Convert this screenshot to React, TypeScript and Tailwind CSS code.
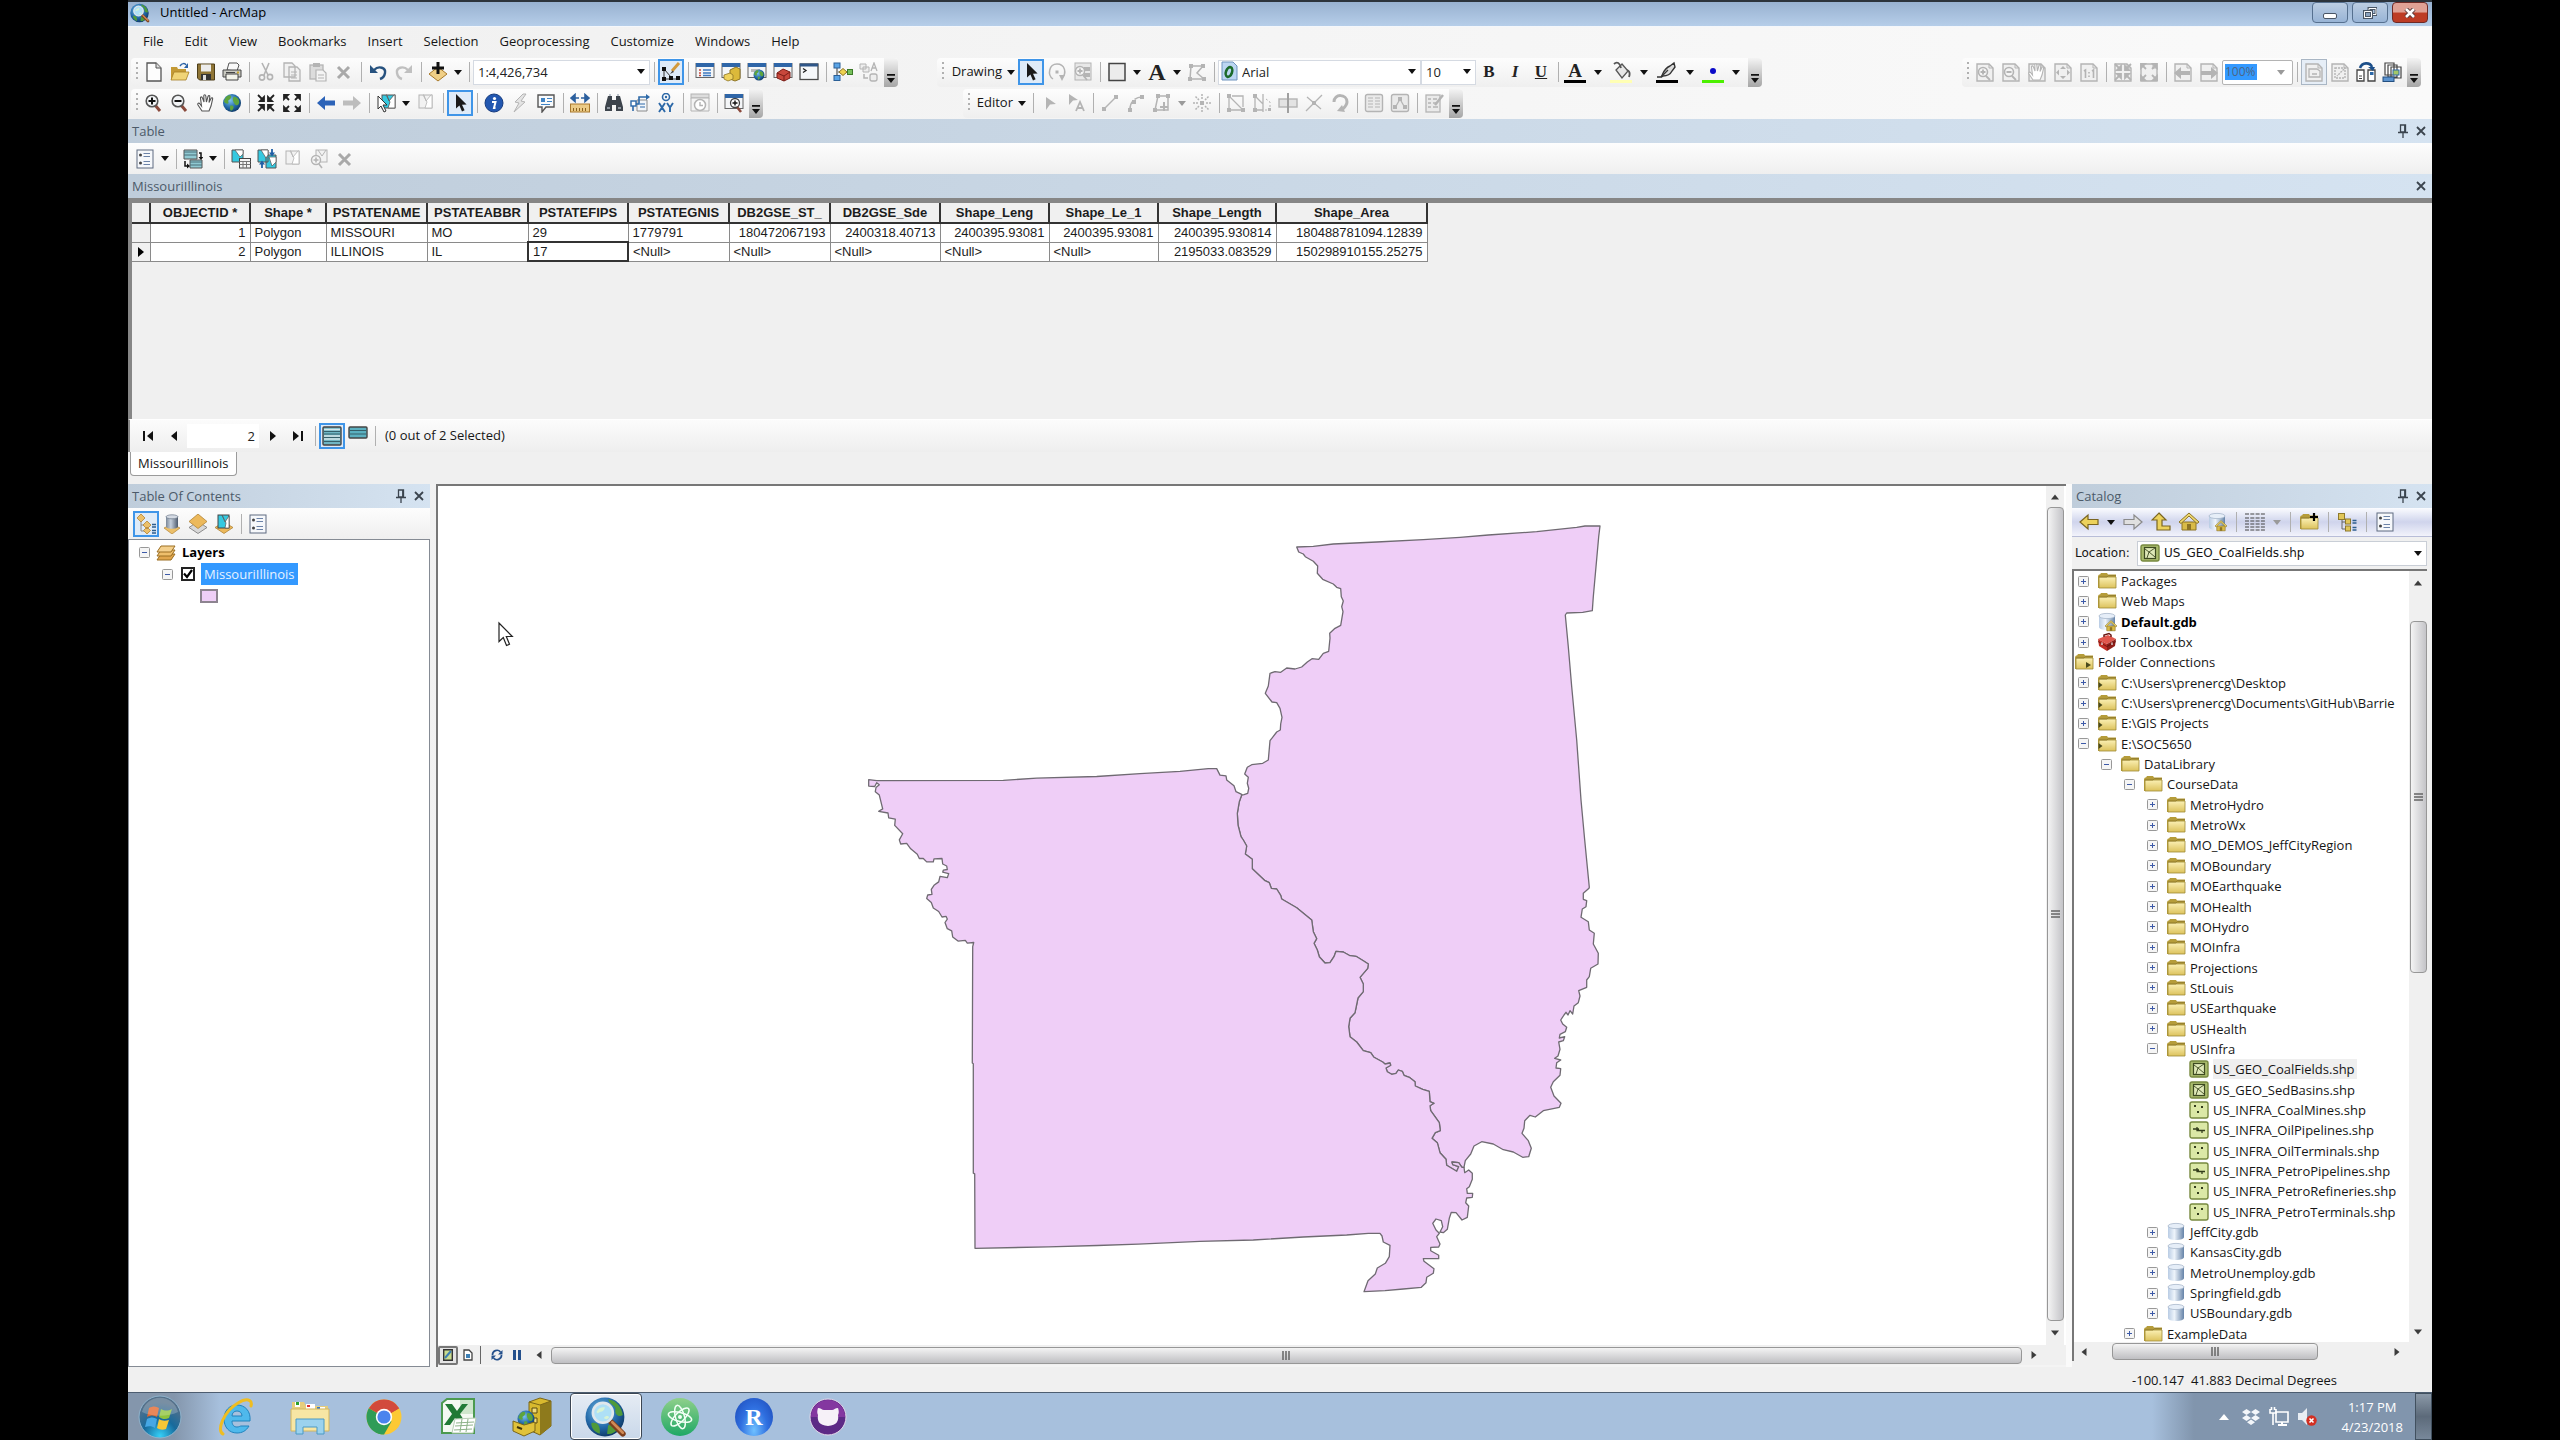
import React from "react";

/* ------------------------------------------------------------------ */
/* Icons (20 x 20 grid)                                                */
/* ------------------------------------------------------------------ */

type Kids = { children?: React.ReactNode };

const Ic = ({ children }: Kids) => (
  <svg viewBox="0 0 20 20" className="size-5 shrink-0" fill="none" aria-hidden="true">
    {children}
  </svg>
);

const G = "#b4b4b4";

const Magnifier = ({ sign }: { sign: "+" | "-" }) => (
  <Ic>
    <path d="M11 12l5 6" stroke="#8a4a3c" strokeWidth="3" />
    <circle cx="8" cy="8" r="5.8" fill="#f2f4f6" stroke="#555" strokeWidth="1.6" />
    <path d={sign === "+" ? "M4.5 8h7M8 4.5v7" : "M4.5 8h7"} stroke="#111" strokeWidth="2" />
  </Ic>
);
const Page = ({ children }: Kids) => (
  <Ic>
    <path d="M2 2h12l4 4v13H2z" fill="#f0f0f0" stroke={G} strokeWidth="1.4" />
    <path d="M14 2v4h4" stroke={G} />
    {children}
  </Ic>
);
const WindowFrame = ({ children }: Kids) => (
  <Ic>
    <rect x="1" y="1.5" width="18" height="14" fill="#f4f6f8" stroke="#666" />
    <rect x="1" y="1" width="18" height="4" fill="#2f66a8" />
    {children}
  </Ic>
);
const Folder = ({ link, root, plus }: { link?: boolean; root?: boolean; plus?: boolean }) => (
  <Ic>
    <path d="M1 5l1-1.5h1l1-1.5h6l1 1.5h8V17H1z" fill="#b59c3a" />
    <path d="M2 6h17v11H2z" fill="url(#folderFace)" stroke="#a08a35" strokeWidth=".8" />
    <path d="M2 6h8l1.500-1.500H19" stroke="#8f7a2c" strokeWidth=".8" />
    {link && <path d="M1.500 9l4 3-4 3z" fill="#4a4a1c" />}
    {root && <path d="M12 10l5 3-5 3z" fill="#4a4a1c" />}
    {plus && <path d="M15 1v8M11 5h8" stroke="#000" strokeWidth="2.2" />}
  </Ic>
);
const House = ({ x = 0, y = 0, s = 1 }: { x?: number; y?: number; s?: number }) => (
  <g transform={`translate(${x} ${y}) scale(${s})`}>
    <path d="M3 10h14v8H3z" fill="#d9bb48" stroke="#8d7425" />
    <path d="M0 10L10 1l10 9-2 1.500L10 4l-8 7.500z" fill="#efd86e" stroke="#8d7425" />
    <path d="M8 12h4v6H8z" fill="#8d7425" />
  </g>
);
const Cylinder = ({ home }: { home?: boolean }) => (
  <Ic>
    <path d="M2 4v11c0 2 3.500 3 8 3s8-1 8-3V4z" fill="url(#cyl)" />
    <ellipse cx="10" cy="4" rx="8" ry="2.6" fill="#e6eef8" stroke="#a8b8cc" strokeWidth=".8" />
    {home && <House x={8} y={8} s={0.6} />}
  </Ic>
);
const Toolbox = () => (
  <Ic>
    <path d="M1 7l10-4 8 4-9 5z" fill="#e0574c" />
    <path d="M1 7l9 5v7L2 14z" fill="#c23026" />
    <path d="M19 7l-9 5v7l8-5z" fill="#8f1f18" />
    <path d="M7 5V3l5-1.500L14 3v2" stroke="#6b1712" strokeWidth="1.5" />
    <path d="M1 9.500l9 5 9-5" stroke="#5f120d" strokeWidth=".8" />
    <path d="M5 10.500v2.500M15 10.500v2.500" stroke="#eee" strokeWidth="1.2" />
  </Ic>
);
const Shape = ({ kind }: { kind: "poly" | "pt" | "line" }) => (
  <Ic>
    <rect x="1" y="2" width="18" height="16" rx="2" fill={kind === "poly" ? "#a9bb6c" : "#dbe8a6"} stroke="#77893f" strokeWidth="1.4" />
    {kind === "poly" && (
      <>
        <rect x="4.5" y="4.5" width="11" height="11" fill="#dfe9b8" stroke="#3d4a20" strokeWidth="1.2" />
        <path d="M5 6l4 3 6-4M9 9l-2 6M9 9l6 5" stroke="#3d4a20" strokeWidth=".9" />
      </>
    )}
    {kind === "pt" && <path d="M5 5h2v2H5zM12 6h2v2h-2zM8 11h2v2H8z" fill="#333d1c" />}
    {kind === "line" && <path d="M4 9h6M10 10.500h6M8 7v3.500h4M13 10v3" stroke="#333d1c" strokeWidth="1.3" />}
  </Ic>
);
const CursorArrow = () => (
  <Ic>
    <path d="M6 1v14.500l3.400-3L12 18.500l2.600-1.200-2.600-5.600 4.600-.3z" fill="#1a1a1a" />
  </Ic>
);
const Cross = () => (
  <Ic>
    <path d="M4 5l11 11M15 5L4 16" stroke="#a9a9a9" strokeWidth="3" />
  </Ic>
);
const ListIcon = () => (
  <Ic>
    <rect x="2" y="1" width="16" height="18" fill="#f6f8fb" stroke="#5e6b80" />
    <circle cx="5.5" cy="6" r="1.5" fill="#444" />
    <circle cx="5.5" cy="14" r="1.5" fill="#444" />
    <path d="M8.500 4.500H15M8.500 7.500H15M8.500 12.500H15M8.500 15.500H15" stroke="#6c83a8" />
  </Ic>
);
const TreeIcon = () => (
  <Ic>
    <path d="M5 6v11h6M5 10h6" stroke="#666" />
    <rect x="1.5" y="1.5" width="6" height="6" fill="#e0c659" stroke="#8f7a2c" />
    <rect x="8.5" y="7" width="5" height="5" fill="#e0c659" stroke="#8f7a2c" />
    <rect x="8.5" y="14" width="5" height="5" fill="#e0c659" stroke="#8f7a2c" />
    <path d="M15.500 8.500h4M15.500 11h4M15.500 15.500h4M15.500 18h4" stroke="#2d5e8e" strokeWidth="1.3" />
  </Ic>
);
const BlueArrow = ({ dir, tone }: { dir: "l" | "r"; tone: string }) => (
  <Ic>
    <path d={dir === "l" ? "M1 10l8-7v4.500h10v5H9V17z" : "M19 10l-8-7v4.500H1v5h10V17z"} fill={tone} />
  </Ic>
);
const Undo = ({ flip, tone }: { flip?: boolean; tone: string }) => (
  <Ic>
    <g transform={flip ? "matrix(-1 0 0 1 20 0)" : undefined}>
      <path d="M2 3v8h8z" fill={tone} />
      <path d="M6 8c5-5 12-2 11 3-.5 3-2 5-5 6" stroke={tone} strokeWidth="2.4" />
    </g>
  </Ic>
);
const Corners = ({ out, tone = "#222" }: { out?: boolean; tone?: string }) => (
  <g stroke={tone} strokeWidth="1.8" fill={tone}>
    {out ? (
      <path d="M2 6V2h4zM14 2h4v4zM18 14v4h-4zM6 18H2v-4zM3 3l4 4M17 3l-4 4M3 17l4-4M17 17l-4-4" />
    ) : (
      <path d="M8 4v4H4zM12 4v4h4zM12 16v-4h4zM8 16v-4H4zM2 2l5 5M18 2l-5 5M2 18l5-5M18 18l-5-5" />
    )}
  </g>
);
const Globe = ({ x = 10, y = 10, r = 9 }: { x?: number; y?: number; r?: number }) => (
  <g transform={`translate(${x} ${y}) scale(${r / 10})`}>
    <circle r="10" fill="url(#globe)" />
    <path d="M-7-6c3-4 7-3 6 0s-4 2-3 5-4 2-5-1zM2-7c4 0 6 3 6 6S5 4 3 1 0-5 2-7zM-2 3c3-1 5 1 3 4S-3 8-2 3z" fill="#5da43c" />
  </g>
);
const Hand = ({ tone = "#555" }: { tone?: string }) => (
  <path
    d="M6 18l-4-6c-1-2 1-2.500 2-1l1.500 2L4.500 5c0-1.500 1.500-1.500 2 0L8 9 7.800 3c0-1.600 1.700-1.600 2 0l.6 6L12 3.500c.5-1.400 2-1 1.800.4L13 9.500l2-4c.8-1.300 2-.6 1.600.6L15 13l-2 5z"
    fill="#fff"
    stroke={tone}
    strokeWidth="1.1"
  />
);
const MapSheet = ({ tone = "#35c9e0", edge = "#555" }: { tone?: string; edge?: string }) => (
  <g>
    <rect x="3" y="2" width="13" height="13" fill={tone} stroke={edge} />
    <path d="M8 2l2 6 5-6h1v13H9l2-6-4-7z" fill="#fff" stroke={edge} strokeWidth=".8" />
  </g>
);

const icons = {
  newDoc: (
    <Ic>
      <path d="M3 1h9l5 5v13H3z" fill="#fdfdfd" stroke="#555" strokeWidth="1.3" />
      <path d="M12 1v5h5" fill="#ddd" stroke="#555" />
    </Ic>
  ),
  open: (
    <Ic>
      <path d="M1 5h6l1 2h8v11H1z" fill="#c49a35" />
      <path d="M4 10h15l-3 8H1z" fill="#f0d477" stroke="#a67f25" strokeWidth=".8" />
      <path d="M10 4c2-3 5-3 6-1" stroke="#2b62a6" strokeWidth="1.5" />
      <path d="M18 1v5h-4z" fill="#2b62a6" />
    </Ic>
  ),
  save: (
    <Ic>
      <path d="M1.500 2h17v16h-15l-2-2z" fill="#8f7536" stroke="#4c3d18" />
      <rect x="5" y="2.5" width="10" height="7" fill="#ececec" />
      <rect x="5" y="12" width="10" height="6" fill="#333" />
      <rect x="7" y="13" width="3" height="5" fill="#ddd" />
    </Ic>
  ),
  print: (
    <Ic>
      <path d="M5 8l2-7h8l2 2-2 6z" fill="#fafafa" stroke="#555" />
      <path d="M1 8h18v7H1z" fill="#c9c9c0" stroke="#444" />
      <path d="M4 12h12v6H4z" fill="#f3f3ea" stroke="#444" />
      <path d="M4 10.500h9" stroke="#444" />
      <path d="M15 10.500h2" stroke="#c6a52b" strokeWidth="2" />
    </Ic>
  ),
  cut: (
    <Ic>
      <path d="M6 1l6 12M13 1L8 13" stroke={G} strokeWidth="1.6" />
      <circle cx="6" cy="15.5" r="2.6" stroke={G} strokeWidth="1.6" />
      <circle cx="14" cy="15" r="2.6" stroke={G} strokeWidth="1.6" />
    </Ic>
  ),
  copy: (
    <Ic>
      <path d="M2 1h8l3 3v11H2zM7 5h8l3 3v11H7z" fill="#f1f1f1" stroke={G} strokeWidth="1.3" />
      <path d="M9 10h6M9 13h6M9 16h6" stroke={G} />
    </Ic>
  ),
  paste: (
    <Ic>
      <rect x="2" y="3" width="13" height="14" fill="#dcdcdc" stroke={G} strokeWidth="1.3" />
      <rect x="5" y="1" width="7" height="4" fill={G} />
      <path d="M8 8h7l3 3v8H8z" fill="#f4f4f4" stroke={G} strokeWidth="1.2" />
      <path d="M10 13h6M10 16h6" stroke={G} />
    </Ic>
  ),
  cross: <Cross />,
  undo: <Undo tone="#27527f" />,
  redo: <Undo flip tone="#c0c0c0" />,
  addData: (
    <Ic>
      <path d="M10 5l9 7-9 7-9-7z" fill="#f0cf86" stroke="#a97a2a" />
      <path d="M10 0v12M4 6h12" stroke="#111" strokeWidth="3" />
    </Ic>
  ),
  editorTb: (
    <Ic>
      <path d="M18 1l-7 8" stroke="#d39a3b" strokeWidth="3" />
      <path d="M11.500 8.500L9 12l4-2z" fill="#444" />
      <path d="M3 7v10h14M3 7l7 8" stroke="#333" />
      <path d="M1 5h4v4H1zM1 15h4v4H1zM8 14h4v4H8zM15 14h4v4h-4z" fill="#111" />
    </Ic>
  ),
  toc: (
    <WindowFrame>
      <path d="M4 8h2M4 11h2M4 13.500h2" stroke="#c6483b" strokeWidth="1.6" />
      <path d="M8 8h8M8 11h8M8 13.500h8" stroke="#3e79c0" strokeWidth="1.4" />
    </WindowFrame>
  ),
  catalogWin: (
    <WindowFrame>
      <path d="M9 8l6-3 4 2v10l-5 2-5-2z" fill="#dcb93a" stroke="#8d7425" />
      <path d="M3 13l6-2 3 2v4l-5 2-4-2z" fill="#efd25c" stroke="#8d7425" strokeWidth=".8" />
    </WindowFrame>
  ),
  searchWin: (
    <WindowFrame>
      <rect x="4" y="7" width="9" height="3" fill="#bbb" />
      <Globe x={12} y={13} r={5.5} />
    </WindowFrame>
  ),
  toolboxWin: (
    <WindowFrame>
      <path d="M4 11l6-4 7 3v6l-6 3-7-3z" fill="#c8473b" stroke="#7b1d16" />
      <path d="M4 11l7 3 6-4M11 14v5" stroke="#7b1d16" />
    </WindowFrame>
  ),
  python: (
    <Ic>
      <rect x="1" y="2" width="18" height="15.5" fill="#f6f8fa" stroke="#4b4b4b" strokeWidth="1.3" />
      <rect x="1" y="1.5" width="18" height="3" fill="#2f5688" />
      <path d="M4 6.500l3 2-3 2" stroke="#222" strokeWidth="1.3" />
    </Ic>
  ),
  model: (
    <Ic>
      <path d="M4 5v11M5 10h12" stroke="#555" strokeWidth="1.2" />
      <rect x="1" y="1" width="6" height="5" fill="#5aa4e6" stroke="#2a5f96" />
      <rect x="1" y="13.5" width="6" height="5" fill="#5aa4e6" stroke="#2a5f96" />
      <path d="M10 6.500l4 3.500-4 3.500L6 10z" fill="#eed24f" stroke="#8d7425" />
      <rect x="14.5" y="7.5" width="5" height="5" fill="#77c05b" stroke="#3c7a28" />
    </Ic>
  ),
  convert: (
    <Ic>
      <path d="M1 2h6v5H1zM4 5h6v5H4z" fill="#eee" stroke={G} />
      <path d="M12 9l3-8 3 8M13 6h4" stroke={G} strokeWidth="1.3" />
      <rect x="11" y="12" width="7" height="7" rx="2" fill="#eee" stroke={G} strokeWidth="1.3" />
      <path d="M5 12v4h4" stroke={G} strokeWidth="1.5" />
    </Ic>
  ),
  zoomIn: <Magnifier sign="+" />,
  zoomOut: <Magnifier sign="-" />,
  pan: (
    <Ic>
      <Hand />
    </Ic>
  ),
  full: (
    <Ic>
      <Globe />
    </Ic>
  ),
  fixedIn: (
    <Ic>
      <Corners />
    </Ic>
  ),
  fixedOut: (
    <Ic>
      <Corners out />
    </Ic>
  ),
  back: <BlueArrow dir="l" tone="#2c63b8" />,
  forward: <BlueArrow dir="r" tone="#bdbdbd" />,
  selectFeat: (
    <Ic>
      <g transform="translate(3 0)">
        <MapSheet />
      </g>
      <path d="M2 3v13l3-3 3 6 2-1-3-6h4z" fill="#fff" stroke="#333" />
    </Ic>
  ),
  clearSel: (
    <Ic>
      <MapSheet tone="#f2f2f2" edge={G} />
    </Ic>
  ),
  cursor: <CursorArrow />,
  identify: (
    <Ic>
      <circle cx="10" cy="10" r="9" fill="#2257b0" stroke="#163c80" />
      <circle cx="10.5" cy="5.5" r="1.6" fill="#fff" />
      <path d="M8 9h3.500l-1.500 6h1.500" stroke="#fff" strokeWidth="2" />
    </Ic>
  ),
  bolt: (
    <Ic>
      <path d="M13 1L5 9l4 1-5 9L15 9l-4-1 5-7z" fill="#e4e4e4" stroke={G} />
    </Ic>
  ),
  htmlPopup: (
    <Ic>
      <path d="M2 2h16v12h-8l-4 5v-5H2z" fill="#f8fafc" stroke="#555" strokeWidth="1.4" />
      <rect x="5" y="5" width="4" height="4" fill="#3f83c4" />
      <path d="M11 5.500h5M11 8.500h5M5 11.500h9" stroke="#3f83c4" strokeWidth="1.2" />
    </Ic>
  ),
  measure: (
    <Ic>
      <rect x=".5" y="11" width="19" height="8" fill="#eccb86" stroke="#a9792d" />
      <path d="M3.500 18v-3M6.500 18v-3M9.500 18v-3M12.500 18v-3M15.500 18v-3" stroke="#8b6220" />
      <path d="M1 5l4-3.500v7zM19 5l-4-3.500v7zM5 5h4M11 5h4" fill="#2b5f9e" stroke="#2b5f9e" strokeWidth="1.6" />
    </Ic>
  ),
  find: (
    <Ic>
      <path d="M4 3h4v4h4V3h4l3 11v4h-7v-6H8v6H1v-4z" fill="#3d444c" />
      <path d="M5 2h2M13 2h2M3 15h3M14 15h3" stroke="#aab3bd" strokeWidth="1.5" />
    </Ic>
  ),
  route: (
    <Ic>
      <path d="M7 7h10v11H7z" fill="#f2f6fa" stroke="#8a8a8a" />
      <path d="M3 18v-7h6V4h8" stroke="#2d69a8" strokeWidth="1.6" />
      <path d="M16 1l4 3-4 3z" fill="#2d69a8" />
      <rect x="1" y="8" width="5" height="5" fill="#fff" stroke="#2d69a8" strokeWidth="1.4" />
      <path d="M10 11h5M10 14h5" stroke="#2d69a8" />
    </Ic>
  ),
  goXY: (
    <Ic>
      <circle cx="10" cy="4" r="3.5" stroke="#2d69a8" strokeWidth="1.6" />
      <circle cx="10" cy="4" r="1.2" fill="#2d69a8" />
      <path d="M3 10l6 9M9 10l-6 9M11 10l3 4.500V19M17 10l-3 4.500" stroke="#2d69a8" strokeWidth="1.9" />
    </Ic>
  ),
  time: (
    <Ic>
      <rect x="1" y="1" width="18" height="4" fill="#ddd" stroke={G} />
      <path d="M1 5h18v13H1z" fill="#f4f4f4" stroke={G} />
      <circle cx="10" cy="12" r="5.5" fill="#fff" stroke={G} strokeWidth="1.5" />
      <path d="M10 9v3.500h3" stroke={G} strokeWidth="1.4" />
    </Ic>
  ),
  viewer: (
    <WindowFrame>
      <path d="M13 14l4 5" stroke="#8a4a3c" strokeWidth="2.6" />
      <circle cx="11" cy="10" r="4.5" fill="#fff" stroke="#444" strokeWidth="1.3" />
      <path d="M8.500 10h5M11 7.500v5" stroke="#111" strokeWidth="1.4" />
    </WindowFrame>
  ),
  rotate: (
    <Ic>
      <path d="M6 17C0 13 2 2 10 2s10 9 5 14" stroke={G} strokeWidth="1.5" />
      <path d="M12 13h6l-3 6z" fill={G} />
      <rect x="8.5" y="8.5" width="3" height="3" fill={G} />
    </Ic>
  ),
  zoomSel: (
    <Ic>
      <rect x="2" y="1" width="16" height="17" fill="#e8e8e8" stroke={G} />
      <path d="M11 5h6v4h-6zM11 11h6v4h-6z" fill={G} />
      <circle cx="7" cy="9" r="4.5" fill="#f5f5f5" stroke={G} strokeWidth="1.5" />
      <path d="M4.500 9h5M7 6.500v5M10 13l4 5" stroke={G} strokeWidth="1.8" />
    </Ic>
  ),
  rect: (
    <Ic>
      <rect x="2" y="1.5" width="16" height="17" fill="#ececec" stroke="#444" strokeWidth="1.5" />
    </Ic>
  ),
  editVerts: (
    <Ic>
      <path d="M4 4h12l-6 7 7 6H3z" stroke={G} strokeWidth="1.5" />
      <path d="M2 2h4v4H2zM14 2h4v4h-4zM1 15h4v4H1zM15 15h4v4h-4z" fill={G} />
    </Ic>
  ),
  editArrow: (
    <Ic>
      <path d="M6 4l10 7-6 .5L6 17z" fill={G} />
    </Ic>
  ),
  editAnno: (
    <Ic>
      <path d="M3 1l9 6-5 .5L3 12z" fill={G} />
      <path d="M10 18l4-9 4 9M11.500 15h5" stroke={G} strokeWidth="1.8" />
    </Ic>
  ),
  segStraight: (
    <Ic>
      <path d="M4 16L16 4" stroke={G} strokeWidth="1.5" />
      <path d="M2 14h4v4H2zM14 2h4v4h-4z" fill={G} />
    </Ic>
  ),
  segArc: (
    <Ic>
      <path d="M4 16C4 9 9 4 16 4" stroke={G} strokeWidth="1.5" strokeDasharray="9 2" />
      <path d="M2 15h4v4H2zM6 7h4v4H6zM14 2h4v4h-4z" fill={G} />
    </Ic>
  ),
  trace: (
    <Ic>
      <path d="M6 3h10v14H3z" stroke={G} strokeWidth="1.5" />
      <path d="M4 1h4v4H4zM14 1h4v4h-4zM1 15h4v4H1z" fill={G} />
      <path d="M12 9v9M8 14h8" stroke={G} strokeWidth="2" />
    </Ic>
  ),
  point: (
    <Ic>
      <path d="M10 1v5M10 14v5M1 10h5M14 10h5M3.500 3.500L7 7M13 13l3.500 3.500M16.500 3.500L13 7M7 13l-3.500 3.500" stroke={G} strokeWidth="1.5" strokeDasharray="2 1" />
      <rect x="8" y="8" width="4" height="4" fill={G} />
    </Ic>
  ),
  editV1: (
    <Ic>
      <path d="M3 3v14h14L3 3M6 3h11v11" stroke={G} strokeWidth="1.3" />
      <path d="M1 1h4v4H1zM1 15h4v4H1zM15 15h4v4h-4z" fill={G} />
    </Ic>
  ),
  reshape: (
    <Ic>
      <path d="M3 3v14M3 3l8 8v6H3M11 1v18" stroke={G} strokeWidth="1.3" />
      <path d="M14 6l4 3v8h-6" stroke={G} strokeDasharray="2 2" />
      <path d="M1 1h4v4H1zM1 15h4v4H1zM16 15h3v3h-3z" fill={G} />
    </Ic>
  ),
  cutPoly: (
    <Ic>
      <rect x="1" y="6" width="18" height="8" fill="#e3e3e3" stroke={G} strokeWidth="1.4" />
      <path d="M10 0v20" stroke="#a0a0a0" strokeWidth="2" />
    </Ic>
  ),
  split: (
    <Ic>
      <path d="M2 18L18 2M3 4l14 12" stroke={G} strokeWidth="1.3" />
      <rect x="8" y="8" width="4" height="4" fill={G} />
    </Ic>
  ),
  rotate2: (
    <Ic>
      <path d="M4 9c0-9 13-8 13 0 0 3-2 5-5 8" stroke={G} strokeWidth="3" />
      <path d="M7 18l8 1-3-7z" fill={G} />
    </Ic>
  ),
  attributes: (
    <Ic>
      <rect x="1.5" y="1.5" width="17" height="17" rx="2" fill="#eaeaea" stroke={G} strokeWidth="1.4" />
      <path d="M4 5h5M4 8h5M4 11h5M4 14h5M11 5h5M11 8h5M11 11h5M11 14h5" stroke={G} />
    </Ic>
  ),
  sketchProps: (
    <Ic>
      <rect x="1.5" y="1.5" width="17" height="17" rx="2" fill="#eaeaea" stroke={G} strokeWidth="1.4" />
      <path d="M5 15l5-9 5 9" stroke={G} strokeWidth="1.3" />
      <path d="M3 12h4v4H3zM8 4h4v4H8zM13 12h4v4h-4z" fill={G} />
    </Ic>
  ),
  create: (
    <Ic>
      <rect x="2" y="2" width="14" height="17" fill="#eaeaea" stroke={G} strokeWidth="1.3" />
      <path d="M4 6h3M4 10h3M4 14h3M9 6h4M9 10h3M9 14h5" stroke={G} strokeWidth="1.5" />
      <path d="M19 2l-8 10" stroke={G} strokeWidth="2.5" />
    </Ic>
  ),
  list: <ListIcon />,
  related: (
    <Ic>
      <path d="M1 1h13v9H1zM7 11h12v8H7z" fill="#8fc9d2" stroke="#555" />
      <path d="M1 3h13M1 6h13M7 13h12M7 16h12" stroke="#4a6e78" />
      <path d="M16 4h2v5M2 12v5h3" stroke="#111" strokeWidth="1.5" />
      <path d="M15.500 8h5L18 11zM4 14.500v5l3-2.500z" fill="#111" />
    </Ic>
  ),
  selectBy: (
    <Ic>
      <path d="M1 1h11v12H1z" fill="#35c9e0" stroke="#555" />
      <path d="M4 1l5 7 3-3V1z" fill="#fff" stroke="#555" strokeWidth=".7" />
      <rect x="8.5" y="9.5" width="11" height="9.5" fill="#f5f5f5" stroke="#444" />
      <path d="M8.500 12.500h11M8.500 15.500h11M12 12v7M15.500 12v7" stroke="#777" />
    </Ic>
  ),
  switchSel: (
    <Ic>
      <path d="M1 1h10v12H1zM9 6h10v13H9z" fill="#35c9e0" stroke="#555" />
      <path d="M4 1l5 8 2-3V1zM12 8l3 9 4-4V8z" fill="#fff" stroke="#555" strokeWidth=".7" />
      <path d="M15 0v6M5 19v-6" stroke="#1f5fa6" strokeWidth="1.8" />
      <path d="M12 3.500h6l-3 4zM2 15.500h6L5 11.500z" fill="#1f5fa6" />
    </Ic>
  ),
  zoomSel2: (
    <Ic>
      <rect x="7" y="1" width="11" height="12" fill="#f2f2f2" stroke={G} />
      <path d="M9 1l4 6 4-6" stroke={G} />
      <circle cx="7" cy="11" r="4.5" fill="#f6f6f6" stroke={G} strokeWidth="1.5" />
      <path d="M4.500 11h5M7 8.500v5M10 15l3 4" stroke={G} strokeWidth="1.6" />
    </Ic>
  ),
  tocOrder: (
    <Ic>
      <path d="M5 7v10h5M5 11h5" stroke="#888" />
      <path d="M5 0l4 4-4 4-4-4zM11 7l4 4-4 4-4-4zM11 13l3.500 3.500L11 20l-3.500-3.500z" fill="#ecc06a" stroke="#b58434" strokeWidth=".8" />
      <path d="M16 10.500h4M16 13h4M16 16.500h4M16 19h4" stroke="#2d5e8e" strokeWidth="1.4" />
    </Ic>
  ),
  tocSource: (
    <Ic>
      <path d="M10 10l8 4-8 6-8-6z" fill="#ecc06a" stroke="#b58434" strokeWidth=".7" />
      <path d="M4 2.500v10c0 3 12 3 12 0v-10z" fill="url(#cylDark)" />
      <ellipse cx="10" cy="2.8" rx="6" ry="2" fill="#d5dbe4" stroke="#6b7889" strokeWidth=".7" />
    </Ic>
  ),
  tocVisible: (
    <Ic>
      <path d="M10 7.500l9 6-9 6-9-6z" fill="#d8d8d8" stroke="#777" strokeWidth=".8" />
      <path d="M10 0l9 7.500-9 7-9-7z" fill="#ecb95c" stroke="#a97a2a" strokeWidth=".7" />
    </Ic>
  ),
  tocSelect: (
    <Ic>
      <path d="M10 8l9 5.500-9 6-9-6z" fill="#ecb95c" stroke="#a97a2a" strokeWidth=".7" />
      <rect x="4" y="1" width="11" height="13" fill="#35c9e0" stroke="#444" />
      <path d="M8 1l3 7 4-6v12h-4l1-5z" fill="#fff" stroke="#555" strokeWidth=".7" />
    </Ic>
  ),
  layers: (
    <Ic>
      <path d="M5 11h14l-4 6H1z" fill="#e0a64d" stroke="#9b6e23" />
      <path d="M5 7h14l-4 6H1z" fill="#eebf6c" stroke="#9b6e23" />
      <path d="M5 3h14l-4 6H1z" fill="#f4d08d" stroke="#9b6e23" />
    </Ic>
  ),
  layoutZoomIn: (
    <Page>
      <circle cx="8" cy="10" r="4.5" fill="#f5f5f5" stroke={G} strokeWidth="1.6" />
      <path d="M5.500 10h5M8 7.500v5M11 14l4 4" stroke={G} strokeWidth="1.8" />
    </Page>
  ),
  layoutZoomOut: (
    <Page>
      <circle cx="8" cy="10" r="4.5" fill="#f5f5f5" stroke={G} strokeWidth="1.6" />
      <path d="M5.500 10h5M11 14l4 4" stroke={G} strokeWidth="1.8" />
    </Page>
  ),
  layoutPan: (
    <Page>
      <Hand tone={G} />
    </Page>
  ),
  layoutWhole: (
    <Page>
      <path d="M10 4l3 3H7zM10 17l3-3H7zM3 10.500l3-3v6zM17 10.500l-3-3v6z" fill={G} />
    </Page>
  ),
  layout100: (
    <Page>
      <path d="M5 9l1.500-1v8M13 9l1.500-1v8M10 10v1.500M10 13.500V15" stroke={G} strokeWidth="1.6" />
    </Page>
  ),
  layoutIn: (
    <Page>
      <Corners tone={G} />
    </Page>
  ),
  layoutOut: (
    <Page>
      <Corners out tone={G} />
    </Page>
  ),
  layoutBack: (
    <Page>
      <path d="M1 11l7-6v4h9v4H8v4z" fill={G} />
    </Page>
  ),
  layoutNext: (
    <Page>
      <path d="M19 11l-7-6v4H2v4h10v4z" fill={G} />
    </Page>
  ),
  draft: (
    <Page>
      <path d="M5 7h8l3 2v6H5zM8 12h5" stroke={G} strokeWidth="1.3" />
    </Page>
  ),
  focus: (
    <Page>
      <path d="M5 6h10v10H5zM14 7l-7 7" stroke={G} strokeWidth="1.4" strokeDasharray="2 1" />
    </Page>
  ),
  changeLayout: (
    <Ic>
      <path d="M1 8h7v11H1zM12 8h7v11h-7z" fill="#fff" stroke="#444" strokeWidth="1.3" />
      <path d="M3 14h3M3 16.500h3" stroke="#444" />
      <rect x="14" y="10" width="3.5" height="3" fill="#2d69a8" />
      <path d="M4 6c2-6 10-6 12-1" stroke="#1c4f8a" strokeWidth="2.6" />
      <path d="M12 5h7l-2 4z" fill="#1c4f8a" />
    </Ic>
  ),
  driven: (
    <Ic>
      <path d="M3 1h9v12H3zM6 3h9v12H6zM9 5h10v11H9z" fill="#fff" stroke="#444" strokeWidth="1.2" />
      <rect x="11" y="8" width="6" height="5" fill="#a3c767" stroke="#2d69a8" />
      <rect x="1" y="15" width="11" height="4.5" fill="#5b93cf" stroke="#234f80" />
    </Ic>
  ),
  catUp: (
    <Ic>
      <path d="M8 1l7 7h-4v6h8v4H6V8H1z" fill="#ecd25c" stroke="#7a6520" strokeWidth="1.2" />
    </Ic>
  ),
  catBack: (
    <Ic>
      <path d="M1 10l8-7v4.500h10v5H9V17z" fill="#ecd25c" stroke="#7a6520" strokeWidth="1.2" />
    </Ic>
  ),
  catForward: (
    <Ic>
      <path d="M19 10l-8-7v4.500H1v5h10V17z" fill="#e0e0e0" stroke="#8a8a8a" strokeWidth="1.2" />
    </Ic>
  ),
  home: (
    <Ic>
      <House />
    </Ic>
  ),
  grid: (
    <Ic>
      <path d="M0 2h20M0 6h20M0 9h20M0 12h20M0 15h20M0 18h20" stroke="#444" strokeWidth="1.2" strokeDasharray="4 1.3" />
    </Ic>
  ),
  tableAll: (
    <Ic>
      <rect x="1" y="1" width="18" height="18" rx="1" fill="#6fb6c4" stroke="#444" strokeWidth="1.4" />
      <path d="M2 3.500h16M2 10h16M2 13h16" stroke="#d8e6e8" strokeWidth="1.6" />
      <path d="M2 5.500h16M2 8h16M2 11.500h16M2 15.500h16" stroke="#35606a" />
    </Ic>
  ),
  tableSel: (
    <Ic>
      <rect x="1" y="1" width="18" height="11" rx="1" fill="#5bb0c0" stroke="#444" strokeWidth="1.4" />
      <path d="M2 4.500h16M2 8h16" stroke="#35606a" />
    </Ic>
  ),
};

/* ------------------------------------------------------------------ */
/* Toolbar parts                                                       */
/* ------------------------------------------------------------------ */

const Tb = ({ label, active, children }: { label: string; active?: boolean } & Kids) => (
  <button
    type="button"
    aria-label={label}
    className={
      active
        ? "flex h-[26px] w-[26px] shrink-0 items-center justify-center border-2 border-[#3f95e8] bg-[#dfebf8]"
        : "flex h-[26px] w-[26px] shrink-0 items-center justify-center"
    }
  >
    {children}
  </button>
);
const Sep = () => (
  <span className="flex h-6 w-2 shrink-0 justify-center py-0.5">
    <span className="w-px bg-[#b0b0b0]" />
  </span>
);
const Caret = ({ wide, faded }: { wide?: boolean; faded?: boolean }) => (
  <span className={wide ? "flex w-5 shrink-0 justify-center" : "flex w-3.5 shrink-0 justify-center"}>
    <svg viewBox="0 0 8 5" className="h-[5px] w-2" aria-hidden="true">
      <path d="M0 0h8L4 5z" fill={faded ? "#9a9a9a" : "#111"} />
    </svg>
  </span>
);
const Grip = () => (
  <svg viewBox="0 0 10 22" className="h-[22px] w-2.5 shrink-0" aria-hidden="true">
    <path d="M6 1v20" stroke="#b0b0b0" strokeWidth="2" strokeDasharray="2 3" />
  </svg>
);
const Overflow = () => (
  <button type="button" aria-label="Toolbar options" className="ml-0.5 flex h-[29px] w-3.5 shrink-0 items-end justify-center rounded-r-sm bg-linear-to-b from-[#f4f4f4] to-[#a6a6a6] pb-1">
    <svg viewBox="0 0 8 9" className="h-[9px] w-2" aria-hidden="true">
      <path d="M0 0h8v1.800H0zM0 4h8L4 9z" fill="#111" />
    </svg>
  </button>
);
const Toolbar = ({ children, label }: { label: string } & Kids) => (
  <div role="toolbar" aria-label={label} className="flex h-[29px] shrink-0 items-center rounded-sm bg-linear-to-b from-[#fdfdfd] to-[#efefef]">
    {children}
  </div>
);
const PinIcon = () => (
  <svg viewBox="0 0 10 14" className="h-3.5 w-2.5" fill="none" aria-hidden="true">
    <path d="M2.500 1h5v7h-5zM0 8.500h10M5 9v5" stroke="#3b444e" strokeWidth="1.3" />
    <path d="M6.800 1v7" stroke="#3b444e" strokeWidth="1.4" />
  </svg>
);
const CloseIcon = () => (
  <svg viewBox="0 0 10 10" className="size-2.5" fill="none" aria-hidden="true">
    <path d="M1 1l8 8M9 1L1 9" stroke="#3b444e" strokeWidth="1.8" />
  </svg>
);
const PanelTitle = ({ title, pin = true }: { title: string; pin?: boolean }) => (
  <div className="flex h-6 shrink-0 items-center justify-between bg-linear-to-r from-[#bfcddb] to-[#d5e3f1] pr-1.5 pl-1">
    <h2 className="pt-0.5 text-[13px] text-[#4c5a69]">{title}</h2>
    <div className="flex items-center gap-2">
      {pin && (
        <button type="button" aria-label="Auto hide">
          <PinIcon />
        </button>
      )}
      <button type="button" aria-label={`Close ${title}`}>
        <CloseIcon />
      </button>
    </div>
  </div>
);

type IconName = keyof typeof icons;
const Group = ({ names }: { names: [IconName, string][] }) => (
  <>
    {names.map(([n, label]) => (
      <Tb key={n} label={label}>
        {icons[n]}
      </Tb>
    ))}
  </>
);

/* ------------------------------------------------------------------ */
/* Window chrome                                                       */
/* ------------------------------------------------------------------ */

const ArcLogo = ({ className }: { className: string }) => (
  <svg viewBox="0 0 40 40" className={className} fill="none" aria-hidden="true">
    <circle cx="19" cy="20" r="18.5" fill="url(#globe)" />
    <path d="M22 3c8 1 13 8 14 15-4 3-8-1-7-5s-6-5-7-10zM6 26c6-2 9 3 8 10-5-2-8-5-8-10zM22 28c5-2 9 0 10 3-3 4-8 6-11 5z" fill="#4f9a3a" />
    <path d="M25 25l11 11" stroke="#7d3f1e" strokeWidth="5.5" strokeLinecap="round" />
    <path d="M26 25l10 10" stroke="#d08a55" strokeWidth="2.5" strokeLinecap="round" />
    <circle cx="17" cy="16" r="9.5" fill="#aee0f6" stroke="#dfe7ec" strokeWidth="2.5" />
    <path d="M11 15c2-4 6-5 8-4-1 3-2 4-4 4s-3 3-4 0zM18 21c2-3 4-2 5-1-1 2-3 3-5 1z" fill="#d7f3d4" />
  </svg>
);

const TitleBar = () => (
  <header className="flex h-[27px] shrink-0 items-start justify-between border-t-2 border-b border-t-[#2c333b] border-b-[#f4f7fb] bg-linear-to-b from-[#98b1d0] to-[#b6cee9]">
    <h1 className="flex h-[22px] items-center gap-2.5 pl-0.5 text-[13px] text-black">
      <ArcLogo className="size-5" />
      Untitled - ArcMap
    </h1>
    <div className="flex gap-1 pr-1">
      <button type="button" aria-label="Minimize" className="flex h-[21px] w-9 items-center justify-center rounded-sm border border-[#56708f] bg-linear-to-b from-[#bccde2] to-[#98b4d6]">
        <span className="mt-1.5 h-1.5 w-3.5 rounded-xs border border-[#4a5666] bg-white" />
      </button>
      <button type="button" aria-label="Restore" className="flex h-[21px] w-9 items-center justify-center rounded-sm border border-[#56708f] bg-linear-to-b from-[#bccde2] to-[#98b4d6]">
        <svg viewBox="0 0 14 12" className="h-3 w-3.5" fill="none" aria-hidden="true">
          <path d="M6 1.500h7v6H6z" stroke="#4a5666" strokeWidth="3" />
          <path d="M6 1.500h7v6H6z" stroke="#fff" />
          <path d="M1.500 4.500h7v6h-7z" fill="#8ba3c0" stroke="#4a5666" strokeWidth="3" />
          <path d="M1.500 4.500h7v6h-7z" stroke="#fff" />
        </svg>
      </button>
      <button type="button" aria-label="Close" className="flex h-[21px] w-9 items-center justify-center rounded-sm border border-[#6e2a26] bg-linear-to-b from-[#e0a195] from-45% to-[#bd3c25] to-55%">
        <svg viewBox="0 0 12 10" className="h-2.5 w-3" fill="none" aria-hidden="true">
          <path d="M2 1l8 8M10 1L2 9" stroke="#5a3a3a" strokeWidth="4.5" />
          <path d="M2 1l8 8M10 1L2 9" stroke="#fff" strokeWidth="2.5" />
        </svg>
      </button>
    </div>
  </header>
);

const menus = ["File", "Edit", "View", "Bookmarks", "Insert", "Selection", "Geoprocessing", "Customize", "Windows", "Help"];

const MenuBar = () => (
  <nav className="flex h-[30px] shrink-0 items-center gap-[21px] pl-[15px]">
    {menus.map((m) => (
      <button key={m} type="button" className="text-[13px] text-[#161616]">
        {m}
      </button>
    ))}
  </nav>
);

const Underlined = ({ bar, children }: { bar: string } & Kids) => (
  <span className="flex flex-col items-center">
    <span className="flex h-[18px] items-center">{children}</span>
    <span className={`h-[3px] w-[22px] ${bar}`} />
  </span>
);

const ToolbarsTop = () => (
  <div className="flex h-[30px] shrink-0 items-center">
    <div className="flex w-[809px] shrink-0 pl-[3px]">
      <Toolbar label="Standard">
        <Grip />
        <Group names={[["newDoc", "New"], ["open", "Open"], ["save", "Save"], ["print", "Print"]]} />
        <Sep />
        <Group names={[["cut", "Cut"], ["copy", "Copy"], ["paste", "Paste"], ["cross", "Delete"]]} />
        <Sep />
        <Group names={[["undo", "Undo"], ["redo", "Redo"]]} />
        <Sep />
        <Tb label="Add data">{icons.addData}</Tb>
        <Caret />
        <Sep />
        <div className="relative">
          <select aria-label="Map scale" className="h-[25px] w-[177px] appearance-none border border-[#d5dae2] bg-white pl-1 text-[13px] text-[#222]">
            <option>1:4,426,734</option>
          </select>
          <span className="pointer-events-none absolute top-2.5 right-0.5">
            <Caret />
          </span>
        </div>
        <Sep />
        <Tb label="Editor toolbar" active>
          {icons.editorTb}
        </Tb>
        <Sep />
        <Group names={[["toc", "Table of contents"], ["catalogWin", "Catalog"], ["searchWin", "Search"], ["toolboxWin", "ArcToolbox"], ["python", "Python"]]} />
        <Sep />
        <Group names={[["model", "ModelBuilder"], ["convert", "Convert"]]} />
        <Overflow />
      </Toolbar>
    </div>
    <Toolbar label="Drawing">
      <Grip />
      <button type="button" className="flex h-6 w-[71px] items-center justify-end gap-0.5 text-[13px] text-[#161616]">
        Drawing
        <Caret />
      </button>
      <Tb label="Select elements" active>
        {icons.cursor}
      </Tb>
      <Group names={[["rotate", "Rotate"], ["zoomSel", "Zoom to selected"]]} />
      <Sep />
      <Tb label="Rectangle">{icons.rect}</Tb>
      <Caret />
      <Tb label="Text">
        <span className="font-['Liberation_Serif',serif] text-[24px] leading-5 font-bold text-[#222]">A</span>
      </Tb>
      <Caret />
      <Group names={[["editVerts", "Edit vertices"]]} />
      <Sep />
      <div className="relative">
        <select aria-label="Font" className="h-[25px] w-[203px] appearance-none border border-[#d5dae2] bg-white pl-[23px] text-[13px] text-[#222]">
          <option>Arial</option>
        </select>
        <span className="pointer-events-none absolute top-0.5 left-0.5">
          <Ic>
            <path d="M2 1h11l4 4v14H2z" fill="#bcd6f2" stroke="#6f93bd" />
            <ellipse cx="9" cy="11" rx="3" ry="5" transform="rotate(20 9 11)" stroke="#1c6b2a" strokeWidth="2.6" />
          </Ic>
        </span>
        <span className="pointer-events-none absolute top-2.5 right-0.5">
          <Caret />
        </span>
      </div>
      <div className="relative">
        <select aria-label="Font size" className="h-[25px] w-[55px] appearance-none border border-[#d5dae2] bg-white pl-1 text-[13px] text-[#222]">
          <option>10</option>
        </select>
        <span className="pointer-events-none absolute top-2.5 right-0.5">
          <Caret />
        </span>
      </div>
      <Tb label="Bold">
        <span className="font-['Liberation_Serif',serif] text-[17px] font-bold text-[#222]">B</span>
      </Tb>
      <Tb label="Italic">
        <span className="font-['Liberation_Serif',serif] text-[17px] font-bold text-[#222] italic">I</span>
      </Tb>
      <Tb label="Underline">
        <span className="font-['Liberation_Serif',serif] text-[17px] font-bold text-[#222] underline">U</span>
      </Tb>
      <Sep />
      <Tb label="Font color">
        <Underlined bar="bg-black">
          <span className="font-['Liberation_Serif',serif] text-[19px] leading-4 font-bold text-[#222]">A</span>
        </Underlined>
      </Tb>
      <Caret wide />
      <Tb label="Fill color">
        <Underlined bar="bg-[#ffffb4]">
          <Ic>
            <path d="M5 9l6-6 6 7-6 7z" fill="#e6e6e6" stroke="#555" strokeWidth="1.3" />
            <path d="M3 3c3-3 6-1 7 4M16 9c3 1 3 4 2 7" stroke="#555" strokeWidth="1.8" />
          </Ic>
        </Underlined>
      </Tb>
      <Caret wide />
      <Tb label="Line color">
        <Underlined bar="bg-black">
          <Ic>
            <path d="M4 16c2-2 2-8 9-11l4-3 1 4-3 4c-2 4-6 5-9 5z" fill="#ddd" stroke="#333" strokeWidth="1.4" />
            <path d="M0 16h4l7-7" stroke="#333" strokeWidth="1.3" />
          </Ic>
        </Underlined>
      </Tb>
      <Caret wide />
      <Tb label="Marker color">
        <Underlined bar="bg-[#4cf000]">
          <span className="size-1.5 rounded-full bg-[#0a0ac8]" />
        </Underlined>
      </Tb>
      <Caret wide />
      <Overflow />
    </Toolbar>
    <div className="mr-[11px] ml-auto">
      <Toolbar label="Layout">
        <Grip />
        <Group names={[["layoutZoomIn", "Zoom in page"], ["layoutZoomOut", "Zoom out page"], ["layoutPan", "Pan page"], ["layoutWhole", "Whole page"], ["layout100", "100%"]]} />
        <Sep />
        <Group names={[["layoutIn", "Fixed zoom in"], ["layoutOut", "Fixed zoom out"]]} />
        <Sep />
        <Group names={[["layoutBack", "Previous extent"], ["layoutNext", "Next extent"]]} />
        <div className="flex h-[25px] w-[71px] items-center justify-between rounded-xs border border-[#b4b4b4] bg-white">
          <input aria-label="Page zoom" defaultValue="100%" className="ml-0.5 h-4 w-8 bg-[#3399ff] text-[12px] leading-4 text-[#4c6685] outline-none" />
          <span className="mr-1">
            <Caret faded />
          </span>
        </div>
        <Sep />
        <button type="button" aria-label="Draft mode" className="flex h-[26px] w-[26px] items-center justify-center border border-[#a9b6c4] bg-[#e6eef7]">
          {icons.draft}
        </button>
        <Group names={[["focus", "Focus data frame"], ["changeLayout", "Change layout"], ["driven", "Data driven pages"]]} />
        <Overflow />
      </Toolbar>
    </div>
  </div>
);

const ToolbarsBottom = () => (
  <div className="flex h-8 shrink-0 items-center">
    <div className="flex w-[835px] shrink-0 pl-[3px]">
      <Toolbar label="Tools">
        <Grip />
        <Group names={[["zoomIn", "Zoom in"], ["zoomOut", "Zoom out"], ["pan", "Pan"], ["full", "Full extent"]]} />
        <Sep />
        <Group names={[["fixedIn", "Fixed zoom in"], ["fixedOut", "Fixed zoom out"]]} />
        <Sep />
        <Group names={[["back", "Back"], ["forward", "Forward"]]} />
        <Sep />
        <Tb label="Select features">{icons.selectFeat}</Tb>
        <Caret />
        <Tb label="Clear selection">{icons.clearSel}</Tb>
        <Sep />
        <Tb label="Select elements" active>
          {icons.cursor}
        </Tb>
        <Sep />
        <Group names={[["identify", "Identify"], ["bolt", "Hyperlink"], ["htmlPopup", "HTML popup"]]} />
        <Sep />
        <Group names={[["measure", "Measure"]]} />
        <Sep />
        <Group names={[["find", "Find"], ["route", "Find route"], ["goXY", "Go to XY"]]} />
        <Sep />
        <Group names={[["time", "Time slider"]]} />
        <Sep />
        <Group names={[["viewer", "Viewer window"]]} />
        <Overflow />
      </Toolbar>
    </div>
    <Toolbar label="Editor">
      <Grip />
      <button type="button" className="flex h-6 w-14 items-center justify-end gap-0.5 text-[13px] text-[#161616]">
        Editor
        <Caret />
      </button>
      <Sep />
      <Group names={[["editArrow", "Edit tool"], ["editAnno", "Edit annotation"]]} />
      <Sep />
      <Group names={[["segStraight", "Straight segment"], ["segArc", "Arc segment"], ["trace", "Trace"]]} />
      <Caret faded />
      <Group names={[["point", "Point"]]} />
      <Sep />
      <Group names={[["editV1", "Edit vertices"], ["reshape", "Reshape"], ["cutPoly", "Cut polygons"], ["split", "Split"], ["rotate2", "Rotate"]]} />
      <Sep />
      <Group names={[["attributes", "Attributes"], ["sketchProps", "Sketch properties"]]} />
      <Sep />
      <Group names={[["create", "Create features"]]} />
      <Overflow />
    </Toolbar>
  </div>
);

/* ------------------------------------------------------------------ */
/* Attribute table                                                     */
/* ------------------------------------------------------------------ */

const columns = [
  { name: "OBJECTID *", w: "w-[100px]", right: true },
  { name: "Shape *", w: "w-[76px]" },
  { name: "PSTATENAME", w: "w-[101px]" },
  { name: "PSTATEABBR", w: "w-[101px]" },
  { name: "PSTATEFIPS", w: "w-[100px]" },
  { name: "PSTATEGNIS", w: "w-[101px]" },
  { name: "DB2GSE_ST_", w: "w-[101px]", right: true },
  { name: "DB2GSE_Sde", w: "w-[110px]", right: true },
  { name: "Shape_Leng", w: "w-[109px]", right: true },
  { name: "Shape_Le_1", w: "w-[109px]", right: true },
  { name: "Shape_Length", w: "w-[118px]", right: true },
  { name: "Shape_Area", w: "w-[151px]", right: true },
];
const records = [
  ["1", "Polygon", "MISSOURI", "MO", "29", "1779791", "180472067193", "2400318.40713", "2400395.93081", "2400395.93081", "2400395.930814", "180488781094.12839"],
  ["2", "Polygon", "ILLINOIS", "IL", "17", "<Null>", "<Null>", "<Null>", "<Null>", "<Null>", "2195033.083529", "150298910155.25275"],
];

const TablePanel = () => (
  <section className="flex shrink-0 flex-col bg-[#f0f0f0]">
    <PanelTitle title="Table" />
    <div role="toolbar" aria-label="Table" className="flex h-[31px] items-center bg-linear-to-b from-[#fdfdfd] to-[#efefef] pl-1">
      <Group names={[["list", "Table options"]]} />
      <Caret />
      <Sep />
      <Group names={[["related", "Related tables"]]} />
      <Caret />
      <Sep />
      <Group names={[["selectBy", "Select by attributes"], ["switchSel", "Switch selection"], ["clearSel", "Clear selection"], ["zoomSel2", "Zoom to selected"], ["cross", "Delete selected"]]} />
    </div>
    <PanelTitle title="MissouriIllinois" pin={false} />
    <div className="h-[221px] border-t-[5px] border-l-4 border-[#868686]">
      <table className="table-fixed border-collapse font-['Liberation_Sans',sans-serif] text-[13px] text-[#1c1c1c]">
        <thead>
          <tr className="h-5">
            <th className="w-[18px] border-r-2 border-b-2 border-[#333] bg-[#f0f0f0]" />
            {columns.map((c) => (
              <th key={c.name} scope="col" className={`${c.w} border-r-2 border-b-2 border-[#333] bg-[#f0f0f0] p-0 text-center leading-4 whitespace-nowrap`}>
                {c.name}
              </th>
            ))}
          </tr>
        </thead>
        <tbody>
          {records.map((r, i) => (
            <tr key={r[0]} className="h-[19px] bg-white">
              <td className="border border-l-0 border-[#8a8a8a] bg-[#f0f0f0] p-0">
                {i === 1 && (
                  <svg viewBox="0 0 6 10" className="mx-auto h-2.5 w-1.5" aria-hidden="true">
                    <path d="M0 0l6 5-6 5z" fill="#000" />
                  </svg>
                )}
              </td>
              {r.map((v, j) => (
                <td
                  key={columns[j].name}
                  className={
                    i === 1 && j === 4
                      ? "border-2 border-[#333] px-1 py-0 leading-4"
                      : columns[j].right && v !== "<Null>"
                        ? "border border-[#8a8a8a] px-1 py-0 text-right leading-4"
                        : "border border-[#8a8a8a] px-1 py-0 leading-4"
                  }
                >
                  {v}
                </td>
              ))}
            </tr>
          ))}
        </tbody>
      </table>
    </div>
    <div className="flex h-[33px] items-center border-t border-l-2 border-t-white border-l-[#868686] bg-linear-to-b from-[#fcfcfc] to-[#eeeeee] pl-[5px]">
      <Tb label="First record">
        <Ic>
          <path d="M6 5v10" stroke="#111" strokeWidth="2" />
          <path d="M15 5v10l-6-5z" fill="#111" />
        </Ic>
      </Tb>
      <Tb label="Previous record">
        <Ic>
          <path d="M13 5v10l-6-5z" fill="#111" />
        </Ic>
      </Tb>
      <input aria-label="Record number" defaultValue="2" className="h-6 w-[72px] bg-white pr-1 text-right text-[13px] text-[#222] outline-none" />
      <Tb label="Next record">
        <Ic>
          <path d="M8 5v10l6-5z" fill="#111" />
        </Ic>
      </Tb>
      <Tb label="Last record">
        <Ic>
          <path d="M5 5v10l6-5z" fill="#111" />
          <path d="M14 5v10" stroke="#111" strokeWidth="2" />
        </Ic>
      </Tb>
      <Sep />
      <Tb label="Show all records" active>
        {icons.tableAll}
      </Tb>
      <Tb label="Show selected records">{icons.tableSel}</Tb>
      <Sep />
      <span className="pl-1.5 text-[13px] text-[#161616]">(0 out of 2 Selected)</span>
    </div>
    <div className="flex h-8 items-start pl-0.5">
      <button type="button" className="h-6 rounded-b-sm border border-t-0 border-[#9b9b9b] bg-white px-[7px] text-[13px] text-[#161616]">
        MissouriIllinois
      </button>
    </div>
  </section>
);

/* ------------------------------------------------------------------ */
/* Table of contents                                                   */
/* ------------------------------------------------------------------ */

const Expander = ({ open }: { open?: boolean }) => (
  <button type="button" aria-label={open ? "Collapse" : "Expand"} className="flex size-[11px] shrink-0 items-center justify-center">
    <svg viewBox="0 0 11 11" className="size-[11px]" fill="none" aria-hidden="true">
      <rect x=".5" y=".5" width="10" height="10" rx="1" fill="#f5f5f5" stroke="#989898" />
      <path d={open ? "M3 5.500h5" : "M3 5.500h5M5.500 3v5"} stroke="#3d5aa8" />
    </svg>
  </button>
);

const ContentsPanel = () => (
  <aside className="flex w-[302px] shrink-0 flex-col">
    <PanelTitle title="Table Of Contents" />
    <div role="toolbar" aria-label="Contents" className="flex h-[31px] items-center bg-linear-to-b from-[#fdfdfd] to-[#efefef] pl-[5px]">
      <Tb label="List by drawing order" active>
        {icons.tocOrder}
      </Tb>
      <Group names={[["tocSource", "List by source"], ["tocVisible", "List by visibility"], ["tocSelect", "List by selection"]]} />
      <Sep />
      <Group names={[["list", "Options"]]} />
    </div>
    <ul className="flex-1 border border-[#858b94] bg-white pt-0.5 pl-2.5">
      <li>
        <div className="flex h-[21px] items-center">
          <Expander open />
          <span className="ml-1.5 flex">{icons.layers}</span>
          <span className="ml-1.5 text-[13px] font-bold text-black">Layers</span>
        </div>
        <ul className="pl-[23px]">
          <li>
            <div className="flex h-[22px] items-center">
              <Expander open />
              <input id="layer-on" type="checkbox" defaultChecked className="ml-2 size-3.5 appearance-none border-2 border-[#222] bg-white" />
              <svg viewBox="0 0 10 10" className="pointer-events-none -ml-3 size-2.5" fill="none" aria-hidden="true">
                <path d="M1 4.500l3 3.500L9 1" stroke="#000" strokeWidth="2.2" />
              </svg>
              <label htmlFor="layer-on" className="ml-2 h-[22px] bg-[#3399ff] px-[3px] text-[13px] leading-[22px] text-[#e6f2ff]">
                MissouriIllinois
              </label>
            </div>
            <span className="mt-1 ml-[38px] block h-3.5 w-[18px] border-2 border-[#8d8490] bg-[#efcff7]" />
          </li>
        </ul>
      </li>
    </ul>
  </aside>
);

/* ------------------------------------------------------------------ */
/* Map view                                                            */
/* ------------------------------------------------------------------ */

// Digitised vertices: a run of x,y pairs relative to an origin, with the units per map pixel.
const run = (ox: number, oy: number, ux: number, uy: number, src: string) =>
  src.split(" ").map((p) => {
    const [x, y] = p.split(",").map(Number);
    return [ox + x / ux, oy + y / uy];
  });

const illinoisNorth = run(1180, 500, 3, 3, "185,885 192,884 203,880 206,865 202,850 205,832 194,822 202,802 215,794 248,790 265,780 270,722 290,696 301,690 302,672 306,652 300,625 290,608 276,606 256,580 265,558 270,520 285,515 302,517 320,504 345,507 365,501 382,486 396,476 416,478 430,460 446,454 450,415 449,400 465,385 482,376 489,335 485,320 490,303 484,290 482,266 470,262 460,252 428,238 412,220 413,198 400,184 376,170 370,162 356,156 350,141 400,139 460,132 590,126 730,119 840,112 925,105 1070,95 1190,82 1215,78 1260,78 1256,110 1248,200 1240,290 1237,332 1208,337 1160,339 1156,345 1165,440 1175,560 1190,720 1203,900 1214,1020 1222,1100 1228,1162");
const illinoisEast = run(1200, 840, 3, 3, "1167,145 1150,160 1150,178 1160,182 1158,200 1147,207 1143,232 1165,245 1168,270 1183,280 1180,312 1195,340 1194,372 1172,385 1168,410 1160,420 1160,442 1136,452 1140,468 1135,488 1122,498 1118,522 1110,512 1104,525 1098,517 1092,525 1082,540 1088,552 1100,562 1096,575 1080,583 1078,594 1094,590 1090,602 1076,606 1080,628 1074,648 1064,655 1082,660 1070,668 1068,684 1082,686 1080,706 1060,725 1052,742 1062,768 1083,790 1078,802 1030,812 1006,831 990,826 974,842 972,865 966,880 985,902 994,925 986,950 968,952 940,936 910,929 880,912 845,905 822,918 812,942 796,962 792,982");
const river = [
  ...run(1180, 500, 3, 3, "185,885 178,905 172,940 174,975 183,1010"),
  ...run(1200, 840, 3, 3, "130,0 140,18 136,42 157,58 157,86 195,122 208,128 214,145 230,147 242,166 245,177 290,203 325,232 335,240 340,275 350,296 342,310 352,330 358,350 375,369 390,368 402,350 408,334 430,336 450,347 468,349 490,362 505,372 503,385 480,412 490,432 490,455 474,474 465,518 450,535 446,560 450,590 470,606 490,632 512,638 522,652 548,666 555,672 570,669 572,676 558,684 562,695 575,703 588,700 595,690 607,694 612,706 628,712 645,725 646,738 668,748 688,754 690,785 702,790 690,797 692,812 718,848 721,872 706,878 696,895 712,908 720,938 738,958 740,976 770,994 776,980 758,974 756,966 776,968 786,982 792,982"),
];
const missouriSouth = run(1200, 840, 3, 3, "794,998 806,990 817,1000 817,1018 808,1040 800,1046 802,1060 818,1060 817,1072 800,1074 797,1088 806,1098 802,1132 786,1140 768,1118 754,1117 748,1135 742,1168 730,1178 720,1176 728,1160 724,1142 708,1137 698,1150 708,1170 718,1180 710,1190 720,1212 716,1221 692,1222 692,1232 716,1246 716,1256 670,1256 672,1264 702,1286 700,1300 680,1312 678,1328 664,1342 610,1347 555,1352 492,1355 504,1322 526,1302 532,1284 556,1270 568,1250 570,1216 550,1206 546,1188 540,1180 505,1180 440,1185 310,1191 160,1200 0,1204");
const missouriWest = run(860, 740, 3, 2.904, "835,1464 712,1468 565,1472 345,1476 344,1260 340,1258 340,940 337,938 338,600 341,588 322,590 316,582 294,584 278,572 275,554 262,548 255,530 262,520 258,512 246,514 236,498 220,488 214,472 200,460 203,450 216,448 214,434 222,422 236,412 240,396 262,400 266,388 248,384 250,378 262,376 260,366 248,360 246,344 222,345 220,354 200,354 190,344 178,344 172,332 152,316 140,300 122,302 118,290 128,272 104,248 106,230 86,226 84,212 56,207 68,200 58,160 46,150 48,138 58,130 50,124 44,135 26,134 26,115 50,118 430,117 530,111 710,106 840,98 960,91 1045,83 1070,83 1080,102 1098,104 1100,116 1122,133 1128,150 1145,158");

const toPoints = (p: number[][]) => p.map(([x, y]) => `${x.toFixed(1)},${y.toFixed(1)}`).join(" ");

const MapCanvas = () => (
  <svg viewBox="438 486 1608 859" className="block size-full" role="img" aria-label="Map of Missouri and Illinois">
    <g fill="#efcef7" stroke="#6f6a72" strokeWidth="1.3" strokeLinejoin="round">
      <polygon points={toPoints([...illinoisNorth, ...illinoisEast, ...[...river].reverse()])} />
      <polygon points={toPoints([...river, ...missouriSouth, ...missouriWest])} />
    </g>
    <path d="M499 623v18.500l4.300-4 3.200 8 3-1.300-3.200-7.700h6z" fill="#fff" stroke="#222" strokeWidth="1.2" />
  </svg>
);

const Tri = ({ dir }: { dir: "up" | "down" | "left" | "right" }) => (
  <svg viewBox="0 0 8 8" className="size-2" aria-hidden="true">
    <path
      d={{ up: "M0 6.500h8l-4-5z", down: "M0 1.500h8l-4 5z", left: "M6.500 0v8l-5-4z", right: "M1.500 0v8l5-4z" }[dir]}
      fill="#3c3c3c"
    />
  </svg>
);
const GripLines = ({ vertical }: { vertical?: boolean }) => (
  <svg viewBox="0 0 9 9" className="size-[9px]" aria-hidden="true">
    <path d={vertical ? "M0 1h9M0 4h9M0 7h9" : "M1 0v9M4 0v9M7 0v9"} stroke="#666" strokeWidth="1.5" />
  </svg>
);

const MapView = () => (
  <main className="flex min-w-0 flex-1 flex-col border-t-2 border-l-2 border-[#777] bg-white">
    <div className="flex min-h-0 flex-1">
      <div className="min-w-0 flex-1 overflow-hidden">
        <MapCanvas />
      </div>
      <div className="mr-0.5 flex w-[18px] flex-col items-center bg-[#f0f0f0]">
        <span className="flex h-[21px] items-center">
          <Tri dir="up" />
        </span>
        <span className="flex w-[17px] flex-1 items-center justify-center rounded-sm border border-[#979797] bg-linear-to-r from-[#f4f4f4] to-[#c4c4c8]">
          <GripLines vertical />
        </span>
        <span className="flex h-6 items-center">
          <Tri dir="down" />
        </span>
      </div>
    </div>
    <div className="flex h-[22px] shrink-0 items-center border-b-2 border-[#f4f4f4] bg-[#f0f0f0] pr-5">
      <button type="button" aria-label="Data view" className="flex h-[19px] w-5 items-center justify-center rounded-xs border-2 border-[#777] bg-[#e4e4e4]">
        <svg viewBox="0 0 10 12" className="h-3 w-2.5" aria-hidden="true">
          <path d="M.7.700h8.600v10.600H.7z" fill="#c9dc8f" stroke="#333" strokeWidth="1.4" />
          <path d="M2 9l6-7" stroke="#3c7fb5" strokeWidth="2" />
        </svg>
      </button>
      <button type="button" aria-label="Layout view" className="flex w-5 justify-center">
        <svg viewBox="0 0 10 12" className="h-3 w-2.5" aria-hidden="true">
          <path d="M1 1h5l3 3v7H1z" fill="#fff" stroke="#444" strokeWidth="1.3" />
          <path d="M3 5h4v4H3z" fill="#3c7fb5" />
        </svg>
      </button>
      <span className="mx-0.5 h-[18px] w-px bg-[#666]" />
      <button type="button" aria-label="Refresh" className="ml-1 flex w-5 justify-center">
        <svg viewBox="0 0 12 12" className="size-3" fill="none" aria-hidden="true">
          <path d="M1.500 6A4.500 4.500 0 0 1 9.500 3M10.500 6A4.500 4.500 0 0 1 2.500 9" stroke="#24508c" strokeWidth="1.7" />
          <path d="M11.500 1v4.500H7zM.5 11V6.500H5z" fill="#24508c" />
        </svg>
      </button>
      <button type="button" aria-label="Pause" className="flex w-5 justify-center gap-0.5">
        <span className="h-2.5 w-[3px] bg-[#24508c]" />
        <span className="h-2.5 w-[3px] bg-[#24508c]" />
      </button>
      <span className="flex w-6 justify-center">
        <Tri dir="left" />
      </span>
      <span className="flex h-[17px] flex-1 items-center justify-center rounded-sm border border-[#979797] bg-linear-to-b from-[#f4f4f4] to-[#bfbfc2]">
        <GripLines />
      </span>
      <span className="flex w-6 justify-center">
        <Tri dir="right" />
      </span>
    </div>
  </main>
);

/* ------------------------------------------------------------------ */
/* Catalog                                                             */
/* ------------------------------------------------------------------ */

type Kind = "folder" | "link" | "root" | "gdb" | "home" | "tbx" | "poly" | "pt" | "line";
type Item = { t: string; l: number; k: Kind; e?: "+" | "-"; on?: boolean; bold?: boolean };

const items: Item[] = [
  { t: "Packages", l: 1, k: "folder", e: "+" },
  { t: "Web Maps", l: 1, k: "folder", e: "+" },
  { t: "Default.gdb", l: 1, k: "home", e: "+", bold: true },
  { t: "Toolbox.tbx", l: 1, k: "tbx", e: "+" },
  { t: "Folder Connections", l: 0, k: "root" },
  { t: "C:\\Users\\prenercg\\Desktop", l: 1, k: "link", e: "+" },
  { t: "C:\\Users\\prenercg\\Documents\\GitHub\\Barrie", l: 1, k: "link", e: "+" },
  { t: "E:\\GIS Projects", l: 1, k: "link", e: "+" },
  { t: "E:\\SOC5650", l: 1, k: "link", e: "-" },
  { t: "DataLibrary", l: 2, k: "folder", e: "-" },
  { t: "CourseData", l: 3, k: "folder", e: "-" },
  ...["MetroHydro", "MetroWx", "MO_DEMOS_JeffCityRegion", "MOBoundary", "MOEarthquake", "MOHealth", "MOHydro", "MOInfra", "Projections", "StLouis", "USEarthquake", "USHealth"].map(
    (t): Item => ({ t, l: 4, k: "folder", e: "+" }),
  ),
  { t: "USInfra", l: 4, k: "folder", e: "-" },
  { t: "US_GEO_CoalFields.shp", l: 5, k: "poly", on: true },
  { t: "US_GEO_SedBasins.shp", l: 5, k: "poly" },
  { t: "US_INFRA_CoalMines.shp", l: 5, k: "pt" },
  { t: "US_INFRA_OilPipelines.shp", l: 5, k: "line" },
  { t: "US_INFRA_OilTerminals.shp", l: 5, k: "pt" },
  { t: "US_INFRA_PetroPipelines.shp", l: 5, k: "line" },
  { t: "US_INFRA_PetroRefineries.shp", l: 5, k: "pt" },
  { t: "US_INFRA_PetroTerminals.shp", l: 5, k: "pt" },
  ...["JeffCity.gdb", "KansasCity.gdb", "MetroUnemploy.gdb", "Springfield.gdb", "USBoundary.gdb"].map(
    (t): Item => ({ t, l: 4, k: "gdb", e: "+" }),
  ),
  { t: "ExampleData", l: 3, k: "folder", e: "+" },
];

const indent = ["pl-0", "pl-0", "pl-[23px]", "pl-[46px]", "pl-[69px]", "pl-[92px]"];

const ItemIcon = ({ k }: { k: Kind }) => {
  if (k === "folder") return <Folder />;
  if (k === "link") return <Folder link />;
  if (k === "root") return <Folder root />;
  if (k === "gdb") return <Cylinder />;
  if (k === "home") return <Cylinder home />;
  if (k === "tbx") return <Toolbox />;
  return <Shape kind={k} />;
};

const CatalogPanel = () => (
  <aside className="flex w-[360px] shrink-0 flex-col bg-[#f0f0f0]">
    <PanelTitle title="Catalog" />
    <div role="toolbar" aria-label="Catalog" className="flex h-[29px] shrink-0 items-center gap-0.5 border-b border-[#b8bdd8] bg-linear-to-b from-[#fbfcff] via-[#cfd4ec] to-[#f2f3fb] pl-1">
      <Group names={[["catBack", "Back"]]} />
      <Caret />
      <Group names={[["catForward", "Forward"], ["catUp", "Up one level"], ["home", "Home"]]} />
      <Tb label="Default geodatabase">
        <Cylinder home />
      </Tb>
      <Sep />
      <Group names={[["grid", "View"]]} />
      <Caret faded />
      <Sep />
      <Tb label="Connect folder">
        <Folder plus />
      </Tb>
      <Sep />
      <Tb label="Toggle tree">
        <TreeIcon />
      </Tb>
      <Sep />
      <Group names={[["list", "Options"]]} />
    </div>
    <div className="flex h-8 shrink-0 items-center pr-[5px] pl-[3px] font-['DejaVu_Sans','Liberation_Sans',sans-serif] text-[12px] text-[#161616]">
      <label htmlFor="location" className="w-[62px]">
        Location:
      </label>
      <div className="relative flex-1">
        <select id="location" className="h-[25px] w-full appearance-none border border-[#c9ced6] bg-white pl-[26px]">
          <option>US_GEO_CoalFields.shp</option>
        </select>
        <span className="pointer-events-none absolute top-0.5 left-[3px]">
          <Shape kind="poly" />
        </span>
        <span className="pointer-events-none absolute top-2.5 right-0.5">
          <Caret />
        </span>
      </div>
    </div>
    <div className="mr-[5px] mb-1.5 flex min-h-0 flex-1 flex-col border-t-2 border-l-2 border-[#777] bg-[#f0f0f0]">
      <div className="flex min-h-0 flex-1">
        <div className="flex min-w-0 flex-1 flex-col overflow-hidden bg-white">
          <ul className="-mb-0.5 flex flex-1 flex-col justify-between">
            {items.map((it) => (
              <li key={it.t} className={`flex h-5 items-center whitespace-nowrap ${indent[it.l]}`}>
                {it.l > 0 && <span className="flex w-[23px] shrink-0 pl-1">{it.e && <Expander open={it.e === "-"} />}</span>}
                <span className="flex w-6 shrink-0">
                  <ItemIcon k={it.k} />
                </span>
                <span
                  className={
                    it.on
                      ? "bg-[#efefef] pr-0.5 text-[13px] leading-5 text-[#161616]"
                      : it.bold
                        ? "text-[13px] leading-4 font-bold text-black"
                        : "text-[13px] leading-4 text-[#161616]"
                  }
                >
                  {it.t}
                </span>
              </li>
            ))}
          </ul>
        </div>
        <div className="flex w-[18px] shrink-0 flex-col items-center">
          <span className="flex h-[50px] pt-2">
            <Tri dir="up" />
          </span>
          <span className="flex h-[352px] w-[17px] items-center justify-center rounded-sm border border-[#979797] bg-linear-to-r from-[#f4f4f4] to-[#c4c4c8]">
            <GripLines vertical />
          </span>
          <span className="mt-auto pb-1.5">
            <Tri dir="down" />
          </span>
        </div>
      </div>
      <div className="flex h-[19px] shrink-0 items-center pr-[26px] pl-1.5">
        <Tri dir="left" />
        <span className="ml-6 flex h-[17px] w-[206px] items-center justify-center rounded-sm border border-[#979797] bg-linear-to-b from-[#f4f4f4] to-[#bfbfc2]">
          <GripLines />
        </span>
        <span className="ml-auto">
          <Tri dir="right" />
        </span>
      </div>
    </div>
  </aside>
);

/* ------------------------------------------------------------------ */
/* Task bar                                                            */
/* ------------------------------------------------------------------ */

const Big = ({ children }: Kids) => (
  <svg viewBox="0 0 40 40" className="size-10" fill="none" aria-hidden="true">
    {children}
  </svg>
);

const apps: { name: string; icon: React.ReactNode; active?: boolean }[] = [
  {
    name: "Internet Explorer",
    icon: (
      <Big>
        <path d="M33 29c-3 5-7 7-12 7-8 0-13-6-13-14S13 8 21 8s14 6 13 16H16c0 4 2 6 5 6 2 0 3-1 4-1zM16 19h10c0-3-2-5-5-5s-5 2-5 5z" fill="#4fb9ec" stroke="#2183bd" fillRule="evenodd" />
        <path d="M7 37C0 34 8 14 22 6c8-5 15-4 13 3" stroke="#efbd22" strokeWidth="3" strokeLinecap="round" />
      </Big>
    ),
  },
  {
    name: "Windows Explorer",
    icon: (
      <Big>
        <path d="M2 5h12l2 4h22v25H2z" fill="#e6cd7c" />
        <path d="M5 5h5v5H5zM16 7h9v5h-9zM27 10h8v4h-8z" fill="#fff" />
        <path d="M6 5h3v3H6z" fill="#2ba02b" />
        <path d="M17 8h3v2h-3z" fill="#d33" />
        <path d="M27 10h3v2h-3z" fill="#3a78c9" />
        <path d="M1 12h38v22H1z" fill="#f7e6a4" stroke="#d2b65e" />
        <path d="M6 37V22h28v15h-7v-7H13v7z" fill="#9bd2ee" stroke="#4b9ac5" />
      </Big>
    ),
  },
  {
    name: "Chrome",
    icon: (
      <Big>
        <circle cx="20" cy="20" r="17.5" fill="#fcc934" />
        <path d="M20 20L4.800 11.300A17.500 17.500 0 0 1 35.200 11.300z" fill="#d24a3c" />
        <path d="M4.800 11.300A17.500 17.500 0 0 0 20 37.500L27.500 24.500 20 20z" fill="#2f9c57" />
        <path d="M35.200 11.300H20V20z" fill="#d24a3c" />
        <circle cx="20" cy="20" r="8.2" fill="#fff" />
        <circle cx="20" cy="20" r="6.6" fill="#4a84ee" />
      </Big>
    ),
  },
  {
    name: "Excel",
    icon: (
      <Big>
        <path d="M4 6l5-4h27v34H4z" fill="#f4f9f2" stroke="#4c9a4f" strokeWidth="2" />
        <path d="M22 3h13v14H22z" fill="#cfe6cc" />
        <path d="M7 7h7l5 7 5-7h6L22 17l7 11h-7l-5-7-5 7H6l8-11z" fill="#217a35" />
        <path d="M17 22l21-1-3 15H14z" fill="#fff" stroke="#b7cdb4" />
        <path d="M18 26l18-1M17 29l18-1M16 33l18-1M24 22l-2 13M30 22l-2 13" stroke="#8db389" />
      </Big>
    ),
  },
  {
    name: "ArcCatalog",
    icon: (
      <Big>
        <path d="M17 5l11-4 11 3v25l-11 9-11-5z" fill="#d8b92e" stroke="#7a6618" />
        <path d="M28 8l11-4v25l-11 9z" fill="#8e7a1c" />
        <path d="M17 5l11 3 11-4" stroke="#7a6618" />
        <path d="M20 11h5v5h-5zM20 21h5v5h-5z" fill="#f1dc7a" stroke="#5a4b10" />
        <Globe x={14} y={22} r={8.5} />
        <path d="M1 24l11 4 11-3v9l-11 5-11-5z" fill="#e0c23a" stroke="#7a6618" />
        <path d="M5 30l5 2" stroke="#3e340b" strokeWidth="2" />
      </Big>
    ),
  },
  { name: "ArcMap", icon: <ArcLogo className="size-[42px]" />, active: true },
  {
    name: "Atom",
    icon: (
      <Big>
        <circle cx="20" cy="20" r="19" fill="url(#atom)" />
        <g stroke="#f2fff6" strokeWidth="1.5">
          <ellipse cx="20" cy="20" rx="4.5" ry="12" transform="rotate(-15 20 20)" />
          <ellipse cx="20" cy="20" rx="4.5" ry="12" transform="rotate(45 20 20)" />
          <ellipse cx="20" cy="20" rx="4.5" ry="12" transform="rotate(105 20 20)" />
        </g>
        <circle cx="20" cy="20" r="2" fill="#f2fff6" />
      </Big>
    ),
  },
  {
    name: "R",
    icon: (
      <span className="flex size-[38px] items-center justify-center rounded-full bg-radial-[at_50%_85%] from-[#6fc0ff] via-[#2f6fe0] to-[#1b46b4] font-['Liberation_Serif',serif] text-[24px] font-bold text-white">
        R
      </span>
    ),
  },
  {
    name: "GitHub Desktop",
    icon: (
      <Big>
        <circle cx="20" cy="20" r="18" fill="#5d2a86" stroke="#e6dcec" />
        <path d="M3 20a17 17 0 0 1 34 0z" fill="#8437a0" />
        <path d="M10 11c3 0 4 2 6 2h8c2 0 3-2 6-2 1 3 1 5 0 7 1 6-1 10-10 11-9-1-11-5-10-11-1-2-1-4 0-7z" fill="#f6f1f8" />
      </Big>
    ),
  },
];

const TaskBar = () => (
  <footer className="flex h-12 shrink-0 items-stretch border-t border-[#4d5d70] bg-linear-to-r from-[#8496ac] from-2% via-[#a7c0dd] via-4% to-[#a7c0dd]">
    <button type="button" aria-label="Start" className="flex w-[72px] items-center pl-2.5">
      <svg viewBox="0 0 44 44" className="size-11" fill="none" aria-hidden="true">
        <circle cx="22" cy="22" r="21" fill="url(#orb)" stroke="#8fb3cc" />
        <path d="M11 13c4-2 7-2 10 0l-2 9c-3-2-6-2-10 0z" fill="#e2662c" />
        <path d="M23 14c4 2 7 2 11 0l-3 9c-4 2-7 1-10-1z" fill="#8fc33c" />
        <path d="M9 24c4-2 7-2 10 0l-2 9c-3-2-6-2-10-1z" fill="#46a7e4" />
        <path d="M21 24c3 2 6 2 10 1l-3 9c-3 1-6 1-9-1z" fill="#f6c736" />
        <path d="M4 17a18.500 18.500 0 0 1 36 0c-10 5-26 5-36 0z" fill="#fff" fillOpacity=".22" />
      </svg>
    </button>
    <div className="flex gap-0.5">
      {apps.map((a) => (
        <button
          key={a.name}
          type="button"
          aria-label={a.name}
          className={
            a.active
              ? "flex w-[72px] items-center justify-center rounded-sm border border-[#3b4653] bg-linear-to-b from-[#e6ecf4] to-[#c9d8ea] ring-1 ring-white ring-inset"
              : "flex w-[72px] items-center justify-center"
          }
        >
          {a.icon}
        </button>
      ))}
    </div>
    <div className="ml-auto flex w-[280px] items-stretch bg-linear-to-r from-[#a7c0dd] to-[#8195ad] to-15% pl-[67px]">
      <div className="flex items-center gap-2">
        <button type="button" aria-label="Show hidden icons" className="pr-1">
          <svg viewBox="0 0 10 6" className="h-1.5 w-2.5" aria-hidden="true">
            <path d="M5 0l5 6H0z" fill="#fff" />
          </svg>
        </button>
        <svg viewBox="0 0 20 20" className="size-5" fill="#f3f6fa" aria-label="Dropbox" role="img">
          <path d="M5.500 2L10 5 5.500 8 1 5zM14.500 2L19 5l-4.500 3L10 5zM5.500 8L10 11l-4.500 3L1 11zM14.500 8l4.500 3-4.500 3L10 11zM10 12.500l4 2.700-4 2.800-4-2.800z" />
        </svg>
        <svg viewBox="0 0 20 20" className="size-5" fill="none" aria-label="Network" role="img">
          <path d="M7 5h12v10H7z" fill="#8195ad" stroke="#fff" strokeWidth="1.6" />
          <path d="M9 18h9M13 15v3" stroke="#fff" strokeWidth="2" />
          <path d="M1 2v4h6V2M4 6v12M2.500 0v3M5.500 0v3" stroke="#fff" strokeWidth="1.6" />
        </svg>
        <svg viewBox="0 0 20 20" className="size-5" fill="none" aria-label="Muted" role="img">
          <path d="M1 6h4l5-5v17l-5-5H1z" fill="#e8edf3" />
          <circle cx="14.5" cy="13.5" r="5.2" fill="#d22f22" />
          <path d="M12.500 11.500l4 4M16.500 11.500l-4 4" stroke="#fff" strokeWidth="1.6" />
        </svg>
      </div>
      <div className="ml-auto flex flex-col items-center justify-center pr-3 text-[13px] leading-5 text-white">
        <span>1:17 PM</span>
        <span>4/23/2018</span>
      </div>
      <button type="button" aria-label="Show desktop" className="w-[17px] border border-[#41505f] bg-linear-to-b from-[#8b99a8] via-[#5c6a7a] to-[#78889a]" />
    </div>
  </footer>
);

const Gradients = () => (
  <svg className="absolute size-0" aria-hidden="true">
    <defs>
      <radialGradient id="globe" cx=".4" cy=".35" r=".7">
        <stop offset="0" stopColor="#7cc4ee" />
        <stop offset=".6" stopColor="#2268a8" />
        <stop offset="1" stopColor="#0d3560" />
      </radialGradient>
      <radialGradient id="orb" cx=".5" cy=".95" r=".8">
        <stop offset="0" stopColor="#35d0f8" />
        <stop offset=".5" stopColor="#176a9c" />
        <stop offset="1" stopColor="#54708a" />
      </radialGradient>
      <linearGradient id="cyl">
        <stop offset="0" stopColor="#b9cce4" />
        <stop offset=".4" stopColor="#eef4fb" />
        <stop offset="1" stopColor="#6583a8" />
      </linearGradient>
      <linearGradient id="cylDark">
        <stop offset="0" stopColor="#7a8798" />
        <stop offset=".4" stopColor="#c6d0dd" />
        <stop offset="1" stopColor="#4d5a6c" />
      </linearGradient>
      <linearGradient id="folderFace" x2="0" y2="1">
        <stop offset="0" stopColor="#fbf0b4" />
        <stop offset="1" stopColor="#dcc25c" />
      </linearGradient>
      <linearGradient id="atom" x2="0" y2="1">
        <stop offset="0" stopColor="#8fd08a" />
        <stop offset="1" stopColor="#1fa866" />
      </linearGradient>
    </defs>
  </svg>
);

export default function App() {
  return (
    <div className="h-screen bg-black px-32 font-['Open_Sans','Noto_Sans',sans-serif]">
      <Gradients />
      <div className="flex h-full flex-col overflow-hidden bg-linear-to-r from-[#f0f0f0] to-[#fafafa]">
        <TitleBar />
        <MenuBar />
        <ToolbarsTop />
        <ToolbarsBottom />
        <TablePanel />
        <div className="flex min-h-0 flex-1">
          <ContentsPanel />
          <div className="w-1.5 shrink-0" />
          <MapView />
          <div className="w-1.5 shrink-0 bg-[#fafafa]" />
          <CatalogPanel />
        </div>
        <div className="flex h-[25px] shrink-0 items-center justify-end bg-[#f0f0f0] pt-0.5 pr-[95px] text-[13px] whitespace-pre text-[#161616]">-100.147  41.883 Decimal Degrees</div>
        <TaskBar />
      </div>
    </div>
  );
}
